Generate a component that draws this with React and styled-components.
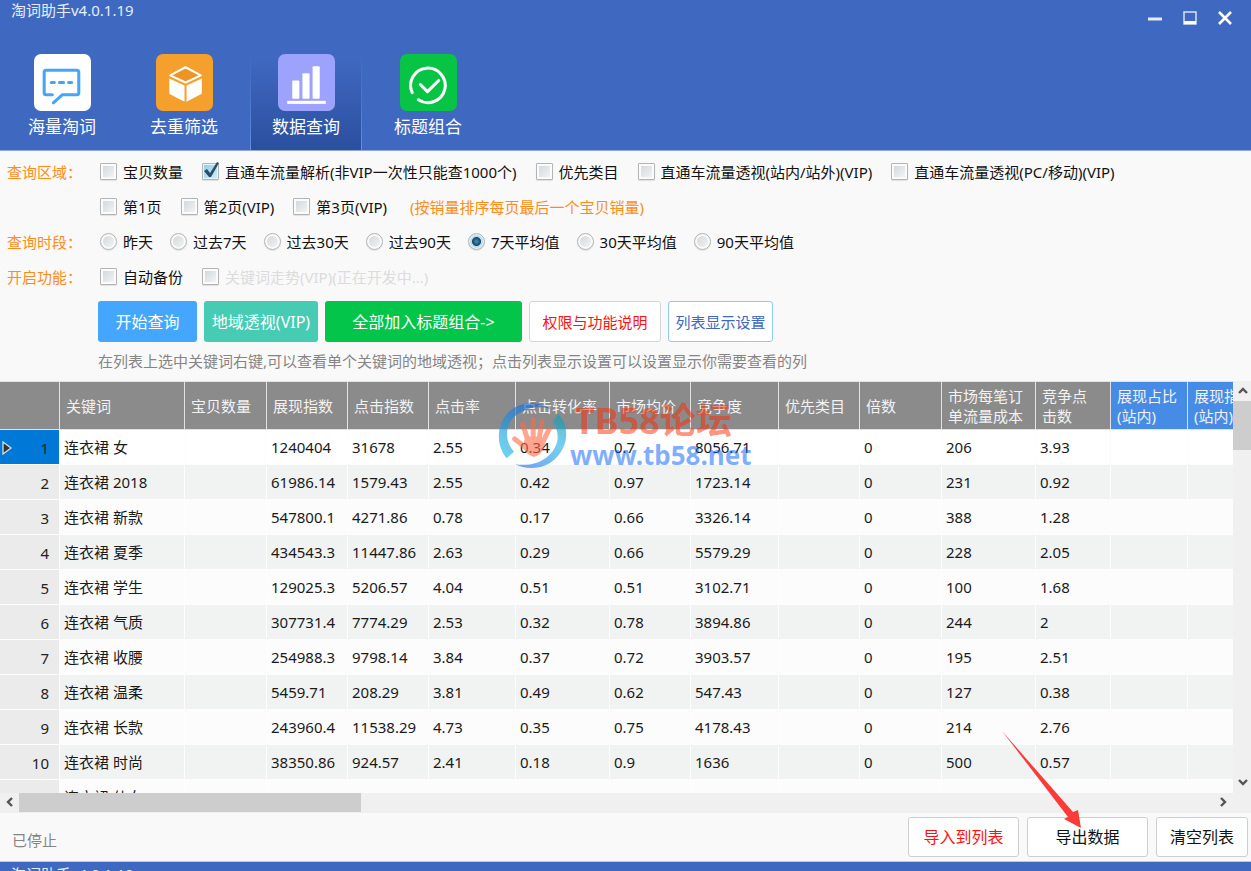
import React, { useState } from 'react';
import styled, { createGlobalStyle, css } from 'styled-components';

const GlobalStyle = createGlobalStyle`
  *, *::before, *::after { box-sizing: border-box; }
  body { margin: 0; background: #f9f9f9; }
  body, button, input, table {
    font-family: "Noto Sans", "Noto Sans CJK SC", sans-serif;
    font-size: 15px;
    line-height: 20px;
  }
  button { margin: 0; padding: 0; border: 0; background: none; cursor: pointer; white-space: nowrap; }
`;

const Page = styled.div`
  display: flex;
  flex-direction: column;
  height: 100vh;
  min-height: 640px;
  overflow: hidden;
`;

const Header = styled.header`
  flex: none;
  background: #3f68c0;
  border-bottom: 1px solid #8fa7dd;
`;

const TitleBar = styled.div`
  display: flex;
  justify-content: space-between;
  height: 50px;
  padding: 0 9px 0 11px;
`;

const AppTitle = styled.h1`
  margin: 0;
  font-size: 15px;
  font-weight: 400;
  line-height: 20px;
  color: #e6ecf9;
`;

const WindowControls = styled.div`
  display: flex;
`;

const WindowButton = styled.button`
  display: flex;
  align-items: center;
  justify-content: center;
  width: 35px;
  height: 36px;
`;

const Nav = styled.nav`
  display: flex;
  gap: 10px;
  padding-left: 6px;
`;

const NavTab = styled.button`
  display: flex;
  flex-direction: column;
  align-items: center;
  gap: 5px;
  width: 112px;
  height: 100px;
  padding-top: 4px;
  font-size: 17px;
  line-height: 22px;
  color: #fff;
  ${(p) => p.$active && css`
    background:
      linear-gradient(#3f68c000, #5f92e8) left / 1px 100% no-repeat,
      linear-gradient(#3f68c000, #5f92e8) right / 1px 100% no-repeat,
      linear-gradient(#3f68c0, #3f68c0 10%, #2b4f9f);
  `}
`;

const TabIcon = styled.svg`
  display: block;
  width: 57px;
  height: 57px;
  border-radius: 7px;
  background: ${(p) => p.$bg};
`;

const Filters = styled.section`
  flex: none;
  padding: 3px 7px 10px;
`;

const FilterRow = styled.div`
  display: flex;
  align-items: center;
  height: 35px;
  white-space: nowrap;
`;

const FilterLabel = styled.div`
  flex: none;
  width: 93px;
  color: #ff8c1a;
`;

const Options = styled.div`
  display: flex;
  align-items: center;
  gap: ${(p) => (p.$tight ? 17 : 19)}px;
`;

const Option = styled.label`
  position: relative;
  display: flex;
  align-items: center;
  gap: 6px;
  color: ${(p) => (p.$disabled ? '#dcdcdc' : '#111')};
`;

const Note = styled.span`
  margin-left: 4px;
  color: #ff8c1a;
`;

const ChoiceInput = styled.input`
  appearance: none;
  flex: none;
  width: 17px;
  height: 17px;
  margin: 0;
  border: 1px solid #b4b4b4;
  background: linear-gradient(135deg, #cfd5da, #f6f7f7);
  box-shadow: inset 0 0 0 2px #fbfbfb, 0 1px 1px #0000001a;
  border-radius: ${(p) => (p.type === 'radio' ? '50%' : '1px')};
  &:checked {
    background: ${(p) => (p.type === 'radio'
      ? 'radial-gradient(circle, #3a83a6 0 1px, #1d4460 4px, #b5dff2 5px)'
      : 'linear-gradient(135deg, #8fcbe6, #d3f0fb)')};
    box-shadow: inset 0 0 0 1px #e8f5fb, 0 1px 1px #0000001a;
  }
`;

const Tick = styled.svg`
  position: absolute;
  left: 0;
  top: 0;
  width: 18px;
  height: 18px;
  pointer-events: none;
`;

const Actions = styled.div`
  display: flex;
  gap: 7px;
  margin: 7px 0 9px 91px;
`;

const ActionButton = styled.button`
  width: ${(p) => p.$width}px;
  height: 41px;
  border-radius: 3px;
  font-size: ${(p) => (p.$outline ? 15 : 16)}px;
  color: ${(p) => p.$color || '#fff'};
  background: ${(p) => p.$bg || '#fff'};
  ${(p) => p.$outline && css`border: 1px solid ${p.$outline};`}
`;

const Hint = styled.p`
  margin: 0 0 0 91px;
  color: #858585;
  white-space: nowrap;
`;

const GridArea = styled.section`
  position: relative;
  flex: 1;
  min-height: 0;
  display: grid;
  grid-template-columns: minmax(0, 1fr) 18px;
  grid-template-rows: minmax(0, 1fr) 20px;
  background: #f0f0f0;
`;

const Viewport = styled.div`
  overflow: hidden;
  background: #fff;
`;

const DataTable = styled.table`
  table-layout: fixed;
  width: 1269px;
  border-collapse: separate;
  border-spacing: 0;
`;

const HeadCell = styled.th`
  height: 49px;
  padding: 0 5px 0 6px;
  border: solid #e2e2e2;
  border-width: 1px 1px 1px 0;
  background: ${(p) => (p.$blue ? '#468be6' : '#8b8b8b')};
  color: #f2f2f2;
  font-weight: 400;
  text-align: left;
  white-space: pre;
`;

const Row = styled.tr`
  background: #fcfcfc;
  &:nth-child(even) { background: #f1f3f3; }
  &:first-child { background: #fff; }
`;

const Cell = styled.td`
  height: 35px;
  padding: 0 0 0 4px;
  border: solid #fdfdfd;
  border-width: 0 1px 1px 0;
  color: #1a1a1a;
  white-space: nowrap;
`;

const RowNumber = styled.th`
  height: 35px;
  padding: 2px 10px 0 2px;
  border: solid #fdfdfd;
  border-width: 0 1px 1px 0;
  background: ${(p) => (p.$current ? '#0078d7' : '#ebebeb')};
  color: #222;
  font-weight: 400;
`;

const NumberInner = styled.span`
  display: flex;
  align-items: center;
  justify-content: ${(p) => (p.$current ? 'space-between' : 'flex-end')};
`;

const VerticalBar = styled.div`
  display: flex;
  flex-direction: column;
`;

const HorizontalBar = styled.div`
  display: flex;
  align-items: stretch;
`;

const ScrollArrow = styled.button`
  display: flex;
  align-items: center;
  justify-content: center;
  flex: none;
  width: 19px;
  height: 20px;
`;

const VerticalThumb = styled.div`
  height: 49px;
  margin-bottom: auto;
  background: #cdcdcd;
`;

const HorizontalThumb = styled.div`
  width: 342px;
  height: 19px;
  margin-right: auto;
  background: #cdcdcd;
`;

const Watermark = styled.div`
  position: absolute;
  left: 498px;
  top: 20px;
  display: flex;
  pointer-events: none;
`;

const WatermarkLogo = styled.svg`
  width: 72px;
  height: 68px;
`;

const WatermarkText = styled.div`
  display: flex;
  flex-direction: column;
  padding-top: 2px;
  font-weight: 700;
`;

const ForumName = styled.span`
  padding-left: 4px;
  font-size: 36px;
  line-height: 36px;
  color: rgba(255, 43, 1, 0.5);
`;

const ForumUrl = styled.span`
  font-size: 26px;
  line-height: 32px;
  color: rgba(0, 93, 255, 0.5);
`;

const Footer = styled.footer`
  flex: none;
  display: flex;
  align-items: center;
  justify-content: space-between;
  height: 49px;
  padding: 0 3px 0 12px;
  border-bottom: 1px solid #b9c8e8;
`;

const Status = styled.span`
  padding-top: 5px;
  color: #858585;
`;

const FooterActions = styled.div`
  display: flex;
  gap: 8px;
`;

const FooterItem = styled.div`
  position: relative;
`;

const FooterButton = styled.button`
  width: ${(p) => p.$width}px;
  height: 40px;
  border: 1px solid #cdd0d3;
  border-radius: 3px;
  background: #fff;
  font-size: 16px;
  color: ${(p) => p.$color || '#111'};
`;

const Pointer = styled.svg`
  position: absolute;
  left: -27px;
  top: -87px;
  width: 82px;
  height: 100px;
  pointer-events: none;
`;

const NextWindow = styled.div`
  flex: none;
  height: 9px;
  padding: 2px 11px 0;
  overflow: hidden;
  background: #3f68c0;
  color: #e6ecf9;
`;

const TABS = [
  {
    label: '海量淘词', bg: '#fff',
    art: (
      <g fill="none" stroke="#45a5f8" strokeWidth="3" strokeLinecap="round" strokeLinejoin="round">
        <path d="M18 40H12q-2 0-2-2V18q0-2 2-2H42q2 0 2 2V38q0 2-2 2H28L19 48" />
        <path d="M17 28h3M25 28h4M34 28h3" />
      </g>
    ),
  },
  {
    label: '去重筛选', bg: '#f5a02c',
    art: (
      <g>
        <path d="M13 24L28 31V47L13 39Z" fill="#fff" />
        <path d="M45 24L30 31V47L45 39Z" fill="#fff" />
        <path d="M29 13L44 21L29 28L14 21Z" fill="#ef9422" stroke="#fff" strokeWidth="2" strokeLinejoin="round" />
      </g>
    ),
  },
  {
    label: '数据查询', bg: '#9da2fc',
    art: (
      <g fill="#fff">
        <rect x="14" y="26" width="7" height="18" rx="1" />
        <rect x="24" y="19" width="7" height="25" rx="1" />
        <rect x="34" y="12" width="7" height="32" rx="1" />
        <rect x="9" y="46" width="38" height="3" />
      </g>
    ),
  },
  {
    label: '标题组合', bg: '#07c445',
    art: (
      <g fill="none" stroke="#fff" strokeWidth="3" strokeLinecap="round" strokeLinejoin="round">
        <path d="M12 38A17 17 0 1 1 18 45" />
        <path d="M20 30L27 37L38 26" />
      </g>
    ),
  },
];

const AREA_OPTIONS = ['宝贝数量', '直通车流量解析(非VIP一次性只能查1000个)', '优先类目', '直通车流量透视(站内/站外)(VIP)', '直通车流量透视(PC/移动)(VIP)'];
const PAGE_OPTIONS = ['第1页', '第2页(VIP)', '第3页(VIP)'];
const PERIODS = ['昨天', '过去7天', '过去30天', '过去90天', '7天平均值', '30天平均值', '90天平均值'];

const ACTIONS = [
  { label: '开始查询', width: 99, bg: '#44a6ff' },
  { label: '地域透视(VIP)', width: 114, bg: '#45ccb3' },
  { label: '全部加入标题组合->', width: 197, bg: '#02c549' },
  { label: '权限与功能说明', width: 132, color: '#ff1010', outline: '#d3d5d8' },
  { label: '列表显示设置', width: 105, color: '#4267bd', outline: '#90c8fb' },
];

const COLUMNS = [
  { label: '关键词', width: 125 },
  { label: '宝贝数量', width: 82 },
  { label: '展现指数', width: 81 },
  { label: '点击指数', width: 81 },
  { label: '点击率', width: 87 },
  { label: '点击转化率', width: 94 },
  { label: '市场均价', width: 81 },
  { label: '竞争度', width: 88 },
  { label: '优先类目', width: 81 },
  { label: '倍数', width: 82 },
  { label: '市场每笔订\n单流量成本', width: 94 },
  { label: '竞争点\n击数', width: 75 },
  { label: '展现占比\n(站内)', width: 77, blue: true },
  { label: '展现指数\n(站内)', width: 81, blue: true },
];

const ROWS = [
  ['连衣裙 女', '', '1240404', '31678', '2.55', '0.34', '0.7', '8056.71', '', '0', '206', '3.93', '', ''],
  ['连衣裙 2018', '', '61986.14', '1579.43', '2.55', '0.42', '0.97', '1723.14', '', '0', '231', '0.92', '', ''],
  ['连衣裙 新款', '', '547800.1', '4271.86', '0.78', '0.17', '0.66', '3326.14', '', '0', '388', '1.28', '', ''],
  ['连衣裙 夏季', '', '434543.3', '11447.86', '2.63', '0.29', '0.66', '5579.29', '', '0', '228', '2.05', '', ''],
  ['连衣裙 学生', '', '129025.3', '5206.57', '4.04', '0.51', '0.51', '3102.71', '', '0', '100', '1.68', '', ''],
  ['连衣裙 气质', '', '307731.4', '7774.29', '2.53', '0.32', '0.78', '3894.86', '', '0', '244', '2', '', ''],
  ['连衣裙 收腰', '', '254988.3', '9798.14', '3.84', '0.37', '0.72', '3903.57', '', '0', '195', '2.51', '', ''],
  ['连衣裙 温柔', '', '5459.71', '208.29', '3.81', '0.49', '0.62', '547.43', '', '0', '127', '0.38', '', ''],
  ['连衣裙 长款', '', '243960.4', '11538.29', '4.73', '0.35', '0.75', '4178.43', '', '0', '214', '2.76', '', ''],
  ['连衣裙 时尚', '', '38350.86', '924.57', '2.41', '0.18', '0.9', '1636', '', '0', '500', '0.57', '', ''],
  ['连衣裙 仙女', '', '', '', '', '', '', '', '', '', '', '', '', ''],
];

function Check({ label, defaultChecked = false, disabled = false }) {
  const [checked, setChecked] = useState(defaultChecked);
  return (
    <Option $disabled={disabled}>
      <ChoiceInput type="checkbox" checked={checked} disabled={disabled} onChange={(e) => setChecked(e.target.checked)} />
      {checked && (
        <Tick viewBox="0 0 18 18" aria-hidden="true">
          <path d="M2 9L5 7L8 11L15 0L17 1L9 15H7Z" fill="#2c4f68" />
        </Tick>
      )}
      {label}
    </Option>
  );
}

function Chevron({ d }) {
  return (
    <svg width="12" height="12" viewBox="0 0 12 12" aria-hidden="true">
      <path d={d} fill="none" stroke="#555" strokeWidth="2.4" />
    </svg>
  );
}

export default function App() {
  const [tab, setTab] = useState('数据查询');
  const [period, setPeriod] = useState('7天平均值');

  return (
    <Page>
      <GlobalStyle />
      <Header>
        <TitleBar>
          <AppTitle>淘词助手v4.0.1.19</AppTitle>
          <WindowControls>
            <WindowButton aria-label="最小化">
              <svg width="14" height="14" viewBox="0 0 14 14"><path d="M0 8h14" stroke="#e4eaf7" strokeWidth="3" /></svg>
            </WindowButton>
            <WindowButton aria-label="最大化">
              <svg width="14" height="14" viewBox="0 0 14 14">
                <rect x="1" y="1" width="12" height="12" fill="none" stroke="#e4eaf7" strokeWidth="1.4" />
                <rect x="1" y="10" width="12" height="3" fill="#fff" />
              </svg>
            </WindowButton>
            <WindowButton aria-label="关闭">
              <svg width="14" height="14" viewBox="0 0 14 14"><path d="M1 1L13 13M13 1L1 13" stroke="#fff" strokeWidth="2.6" /></svg>
            </WindowButton>
          </WindowControls>
        </TitleBar>
        <Nav>
          {TABS.map((t) => (
            <NavTab key={t.label} $active={t.label === tab} onClick={() => setTab(t.label)}>
              <TabIcon viewBox="0 0 56 56" $bg={t.bg} aria-hidden="true">{t.art}</TabIcon>
              {t.label}
            </NavTab>
          ))}
        </Nav>
      </Header>

      <Filters>
        <FilterRow>
          <FilterLabel>查询区域：</FilterLabel>
          <Options>
            {AREA_OPTIONS.map((o, i) => <Check key={o} label={o} defaultChecked={i === 1} />)}
          </Options>
        </FilterRow>
        <FilterRow>
          <FilterLabel />
          <Options>
            {PAGE_OPTIONS.map((o) => <Check key={o} label={o} />)}
            <Note>(按销量排序每页最后一个宝贝销量)</Note>
          </Options>
        </FilterRow>
        <FilterRow>
          <FilterLabel>查询时段：</FilterLabel>
          <Options $tight>
            {PERIODS.map((p) => (
              <Option key={p}>
                <ChoiceInput type="radio" name="period" checked={p === period} onChange={() => setPeriod(p)} />
                {p}
              </Option>
            ))}
          </Options>
        </FilterRow>
        <FilterRow>
          <FilterLabel>开启功能：</FilterLabel>
          <Options>
            <Check label="自动备份" />
            <Check label="关键词走势(VIP)(正在开发中...)" disabled />
          </Options>
        </FilterRow>
        <Actions>
          {ACTIONS.map((a) => (
            <ActionButton key={a.label} $width={a.width} $bg={a.bg} $color={a.color} $outline={a.outline}>{a.label}</ActionButton>
          ))}
        </Actions>
        <Hint>在列表上选中关键词右键,可以查看单个关键词的地域透视；点击列表显示设置可以设置显示你需要查看的列</Hint>
      </Filters>

      <GridArea>
        <Viewport>
          <DataTable>
            <colgroup>
              <col width="60" />
              {COLUMNS.map((c) => <col key={c.label} width={c.width} />)}
            </colgroup>
            <thead>
              <tr>
                <HeadCell />
                {COLUMNS.map((c) => <HeadCell key={c.label} scope="col" $blue={c.blue}>{c.label}</HeadCell>)}
              </tr>
            </thead>
            <tbody>
              {ROWS.map((row, i) => (
                <Row key={row[0]}>
                  <RowNumber scope="row" $current={i === 0}>
                    <NumberInner $current={i === 0}>
                      {i === 0 && (
                        <svg width="11" height="14" viewBox="0 0 11 14" aria-hidden="true">
                          <path d="M1 1V13L9 7Z" fill="#333" stroke="#d6dde3" strokeWidth="1.3" />
                        </svg>
                      )}
                      {i + 1}
                    </NumberInner>
                  </RowNumber>
                  {row.map((v, j) => <Cell key={COLUMNS[j].label}>{v}</Cell>)}
                </Row>
              ))}
            </tbody>
          </DataTable>
        </Viewport>
        <VerticalBar>
          <ScrollArrow aria-label="向上滚动"><Chevron d="M2 8L6 4L10 8" /></ScrollArrow>
          <VerticalThumb />
          <ScrollArrow aria-label="向下滚动"><Chevron d="M2 3L6 7L10 3" /></ScrollArrow>
        </VerticalBar>
        <HorizontalBar>
          <ScrollArrow aria-label="向左滚动"><Chevron d="M8 1L4 5L8 9" /></ScrollArrow>
          <HorizontalThumb />
          <ScrollArrow aria-label="向右滚动"><Chevron d="M3 1L7 5L3 9" /></ScrollArrow>
        </HorizontalBar>
        <Watermark>
          <WatermarkLogo viewBox="24 16 216 204" aria-hidden="true">
            <defs>
              <linearGradient id="arcLeft" x1="0.8" y1="0" x2="0" y2="1">
                <stop offset="0" stopColor="#1d5fd0" /><stop offset="0.5" stopColor="#1e8fe0" /><stop offset="1" stopColor="#1cc4e6" />
              </linearGradient>
              <linearGradient id="arcRight" x1="0.8" y1="0" x2="0.2" y2="1">
                <stop offset="0" stopColor="#0fa0b4" /><stop offset="0.4" stopColor="#2ab4e8" /><stop offset="1" stopColor="#2a78f0" />
              </linearGradient>
            </defs>
            <path d="M185 42C150 15 90 15 55 50C18 88 18 150 50 188L72 168C45 140 42 90 75 62C105 35 150 25 185 42Z" fill="url(#arcLeft)" opacity="0.65" />
            <path d="M205 55L187 78C210 105 210 150 175 180C150 205 105 212 75 205C110 225 165 220 195 190C238 150 238 90 205 55Z" fill="url(#arcRight)" opacity="0.65" />
            <g opacity="0.6" fill="#ff6a48" stroke="#ff6a48" strokeLinecap="round" strokeWidth="15">
              <path d="M74 130L108 156" />
              <path d="M98 86L113 132" />
              <path d="M129 72L130 132" />
              <path d="M156 78L147 132" />
              <path d="M177 101L155 146" />
              <path d="M112 130H150L156 148Q150 172 132 176Q116 172 106 152Z" />
            </g>
          </WatermarkLogo>
          <WatermarkText>
            <ForumName>TB58论坛</ForumName>
            <ForumUrl>www.tb58.net</ForumUrl>
          </WatermarkText>
        </Watermark>
      </GridArea>

      <Footer>
        <Status>已停止</Status>
        <FooterActions>
          <FooterButton $width={111} $color="#ff1010">导入到列表</FooterButton>
          <FooterItem>
            <FooterButton $width={121}>导出数据</FooterButton>
            <Pointer viewBox="0 0 82 100" aria-hidden="true">
              <path d="M2 1L73 82L78 80L81 98L64 89L68 87Z" fill="#fb3b37" />
            </Pointer>
          </FooterItem>
          <FooterButton $width={92}>清空列表</FooterButton>
        </FooterActions>
      </Footer>
      <NextWindow>淘词助手v4.0.1.19</NextWindow>
    </Page>
  );
}
